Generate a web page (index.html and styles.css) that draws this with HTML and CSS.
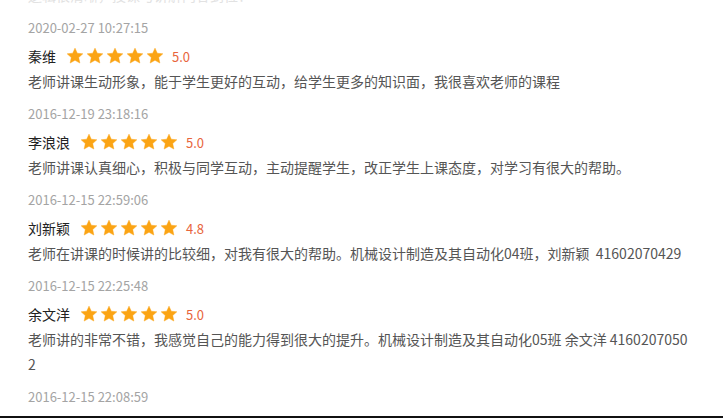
FILE: index.html
```html
<!DOCTYPE html>
<html lang="zh-CN">
<head>
    <meta charset="UTF-8">
    <meta name="viewport" content="width=device-width, initial-scale=1.0">
    <title>课程评价</title>
    <link rel="stylesheet" href="styles.css">
</head>
<body>
    <div class="page">
        <!-- 评价列表 -->
        <div class="comments">
            <p class="partial">逻辑很清晰，授课与讲解内容到位！</p>

            <div class="item">
                <div class="date">2020-02-27 10:27:15</div>
                <div class="user">
                    <span class="name">秦维</span>
                    <span class="stars">
                        <svg viewBox="0 0 24 24"><path d="M12 1.5L15.06 8.29 22.46 9.1 16.95 14.11 18.47 21.4 12 17.7 5.53 21.4 7.05 14.11 1.54 9.1 8.94 8.29Z"/></svg>
                        <svg viewBox="0 0 24 24"><path d="M12 1.5L15.06 8.29 22.46 9.1 16.95 14.11 18.47 21.4 12 17.7 5.53 21.4 7.05 14.11 1.54 9.1 8.94 8.29Z"/></svg>
                        <svg viewBox="0 0 24 24"><path d="M12 1.5L15.06 8.29 22.46 9.1 16.95 14.11 18.47 21.4 12 17.7 5.53 21.4 7.05 14.11 1.54 9.1 8.94 8.29Z"/></svg>
                        <svg viewBox="0 0 24 24"><path d="M12 1.5L15.06 8.29 22.46 9.1 16.95 14.11 18.47 21.4 12 17.7 5.53 21.4 7.05 14.11 1.54 9.1 8.94 8.29Z"/></svg>
                        <svg viewBox="0 0 24 24"><path d="M12 1.5L15.06 8.29 22.46 9.1 16.95 14.11 18.47 21.4 12 17.7 5.53 21.4 7.05 14.11 1.54 9.1 8.94 8.29Z"/></svg>
                    </span>
                    <span class="score">5.0</span>
                </div>
                <p class="text">老师讲课生动形象，能于学生更好的互动，给学生更多的知识面，我很喜欢老师的课程</p>
            </div>

            <div class="item">
                <div class="date">2016-12-19 23:18:16</div>
                <div class="user">
                    <span class="name">李浪浪</span>
                    <span class="stars">
                        <svg viewBox="0 0 24 24"><path d="M12 1.5L15.06 8.29 22.46 9.1 16.95 14.11 18.47 21.4 12 17.7 5.53 21.4 7.05 14.11 1.54 9.1 8.94 8.29Z"/></svg>
                        <svg viewBox="0 0 24 24"><path d="M12 1.5L15.06 8.29 22.46 9.1 16.95 14.11 18.47 21.4 12 17.7 5.53 21.4 7.05 14.11 1.54 9.1 8.94 8.29Z"/></svg>
                        <svg viewBox="0 0 24 24"><path d="M12 1.5L15.06 8.29 22.46 9.1 16.95 14.11 18.47 21.4 12 17.7 5.53 21.4 7.05 14.11 1.54 9.1 8.94 8.29Z"/></svg>
                        <svg viewBox="0 0 24 24"><path d="M12 1.5L15.06 8.29 22.46 9.1 16.95 14.11 18.47 21.4 12 17.7 5.53 21.4 7.05 14.11 1.54 9.1 8.94 8.29Z"/></svg>
                        <svg viewBox="0 0 24 24"><path d="M12 1.5L15.06 8.29 22.46 9.1 16.95 14.11 18.47 21.4 12 17.7 5.53 21.4 7.05 14.11 1.54 9.1 8.94 8.29Z"/></svg>
                    </span>
                    <span class="score">5.0</span>
                </div>
                <p class="text">老师讲课认真细心，积极与同学互动，主动提醒学生，改正学生上课态度，对学习有很大的帮助。</p>
            </div>

            <div class="item">
                <div class="date">2016-12-15 22:59:06</div>
                <div class="user">
                    <span class="name">刘新颖</span>
                    <span class="stars">
                        <svg viewBox="0 0 24 24"><path d="M12 1.5L15.06 8.29 22.46 9.1 16.95 14.11 18.47 21.4 12 17.7 5.53 21.4 7.05 14.11 1.54 9.1 8.94 8.29Z"/></svg>
                        <svg viewBox="0 0 24 24"><path d="M12 1.5L15.06 8.29 22.46 9.1 16.95 14.11 18.47 21.4 12 17.7 5.53 21.4 7.05 14.11 1.54 9.1 8.94 8.29Z"/></svg>
                        <svg viewBox="0 0 24 24"><path d="M12 1.5L15.06 8.29 22.46 9.1 16.95 14.11 18.47 21.4 12 17.7 5.53 21.4 7.05 14.11 1.54 9.1 8.94 8.29Z"/></svg>
                        <svg viewBox="0 0 24 24"><path d="M12 1.5L15.06 8.29 22.46 9.1 16.95 14.11 18.47 21.4 12 17.7 5.53 21.4 7.05 14.11 1.54 9.1 8.94 8.29Z"/></svg>
                        <svg viewBox="0 0 24 24"><path d="M12 1.5L15.06 8.29 22.46 9.1 16.95 14.11 18.47 21.4 12 17.7 5.53 21.4 7.05 14.11 1.54 9.1 8.94 8.29Z"/></svg>
                    </span>
                    <span class="score">4.8</span>
                </div>
                <p class="text">老师在讲课的时候讲的比较细，对我有很大的帮助。机械设计制造及其自动化04班，刘新颖&nbsp;&nbsp;41602070429</p>
            </div>

            <div class="item">
                <div class="date">2016-12-15 22:25:48</div>
                <div class="user">
                    <span class="name">余文洋</span>
                    <span class="stars">
                        <svg viewBox="0 0 24 24"><path d="M12 1.5L15.06 8.29 22.46 9.1 16.95 14.11 18.47 21.4 12 17.7 5.53 21.4 7.05 14.11 1.54 9.1 8.94 8.29Z"/></svg>
                        <svg viewBox="0 0 24 24"><path d="M12 1.5L15.06 8.29 22.46 9.1 16.95 14.11 18.47 21.4 12 17.7 5.53 21.4 7.05 14.11 1.54 9.1 8.94 8.29Z"/></svg>
                        <svg viewBox="0 0 24 24"><path d="M12 1.5L15.06 8.29 22.46 9.1 16.95 14.11 18.47 21.4 12 17.7 5.53 21.4 7.05 14.11 1.54 9.1 8.94 8.29Z"/></svg>
                        <svg viewBox="0 0 24 24"><path d="M12 1.5L15.06 8.29 22.46 9.1 16.95 14.11 18.47 21.4 12 17.7 5.53 21.4 7.05 14.11 1.54 9.1 8.94 8.29Z"/></svg>
                        <svg viewBox="0 0 24 24"><path d="M12 1.5L15.06 8.29 22.46 9.1 16.95 14.11 18.47 21.4 12 17.7 5.53 21.4 7.05 14.11 1.54 9.1 8.94 8.29Z"/></svg>
                    </span>
                    <span class="score">5.0</span>
                </div>
                <p class="text">老师讲的非常不错，我感觉自己的能力得到很大的提升。机械设计制造及其自动化05班 余文洋 41602070502</p>
            </div>

            <div class="item">
                <div class="date">2016-12-15 22:08:59</div>
            </div>
        </div>
    </div>
</body>
</html>
```

FILE: styles.css
```css
/* 基本样式 */
body {
    margin: 0;
    background: #fff;
    font-family: "Noto Sans CJK SC", "Noto Sans", sans-serif;
}

/* 外框，底部黑线 */
.page {
    height: 416px;
    overflow: hidden;
    border-bottom: 2px solid #111;
}

.comments {
    padding: 0 33px 0 28px;
}

/* 上面被截断的评论 */
.partial {
    margin: -17px 0 0;
    height: 25px;
    font-size: 14px;
    line-height: 25px;
    color: #e2e2e2;
}

/* 单条评价 */
.item {
    padding-top: 10px;
}

.date {
    font-size: 13px;
    line-height: 20px;
    color: #a4a4a4;
}

.user {
    display: flex;
    align-items: center;
    height: 24px;
    margin-top: 6px;
}

.name {
    font-size: 14px;
    color: #222;
    margin-right: 10px;
}

.stars {
    display: flex;
    gap: 2px;
}

.stars svg {
    width: 18px;
    height: 18px;
    fill: #fba414;
    stroke: #fba414;
    stroke-width: 0.6;
    stroke-linejoin: round;
}

.score {
    font-size: 13px;
    color: #e8653c;
    margin-left: 8px;
}

.text {
    margin: 1px 0 0;
    font-size: 14px;
    line-height: 25px;
    color: #555;
    word-break: break-all;
}
```
